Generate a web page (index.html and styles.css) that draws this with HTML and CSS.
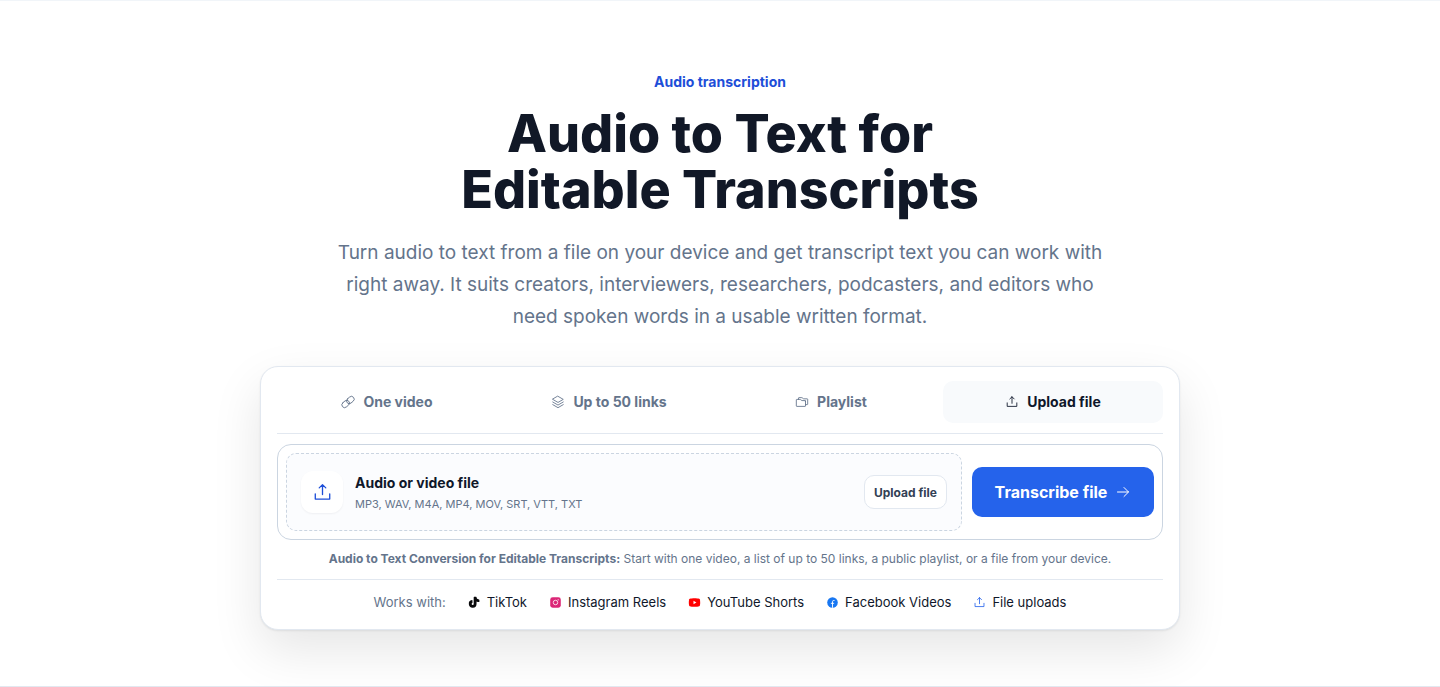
FILE: index.html
```html
<!DOCTYPE html>
<html lang="en">
<head>
<meta charset="utf-8">
<meta name="viewport" content="width=device-width, initial-scale=1">
<title>Audio to Text for Editable Transcripts</title>
<link rel="stylesheet" href="styles.css">
</head>
<body>
<svg class="sprite" aria-hidden="true">
  <symbol id="upload" viewBox="0 0 256 256"><path d="M216 144v64H40v-64M128 152V32M88 72l40-40 40 40"/></symbol>
  <symbol id="link" viewBox="0 0 256 256"><g transform="rotate(-40 128 128)"><rect x="-4" y="78" width="152" height="100" rx="50"/><rect x="108" y="78" width="152" height="100" rx="50"/></g></symbol>
  <symbol id="stack" viewBox="0 0 256 256"><path d="M32 80l96 56 96-56-96-56zM32 128l96 56 96-56M32 176l96 56 96-56"/></symbol>
  <symbol id="folders" viewBox="0 0 256 256"><path d="M192 112v88a8 8 0 0 1-8 8H32a8 8 0 0 1-8-8V88a8 8 0 0 1 8-8h61a8 8 0 0 1 5 2l28 20h58a8 8 0 0 1 8 10z"/><path d="M64 80V56a8 8 0 0 1 8-8h53a8 8 0 0 1 5 2l28 20h66a8 8 0 0 1 8 8v90a8 8 0 0 1-8 8h-32"/></symbol>
  <symbol id="arrow" viewBox="0 0 256 256"><path d="M40 128h176M144 56l72 72-72 72"/></symbol>
</svg>
<main class="hero">
  <header class="intro">
    <p class="eyebrow">Audio transcription</p>
    <h1 class="title">Audio to Text for<br>Editable Transcripts</h1>
    <p class="lead">Turn audio to text from a file on your device and get transcript text you can work with right away. It suits creators, interviewers, researchers, podcasters, and editors who need spoken words in a usable written format.</p>
  </header>
  <section class="card" aria-label="Transcription tool">
    <div class="tabs" role="tablist">
      <button class="tab" role="tab" aria-selected="false"><svg class="icon"><use href="#link"/></svg>One video</button>
      <button class="tab" role="tab" aria-selected="false"><svg class="icon"><use href="#stack"/></svg>Up to 50 links</button>
      <button class="tab" role="tab" aria-selected="false"><svg class="icon"><use href="#folders"/></svg>Playlist</button>
      <button class="tab tab-active" role="tab" aria-selected="true"><svg class="icon"><use href="#upload"/></svg>Upload file</button>
    </div>
    <div class="composer">
      <div class="dropzone">
        <span class="tile"><svg class="icon icon-large"><use href="#upload"/></svg></span>
        <div class="file-text">
          <p class="file-title">Audio or video file</p>
          <p class="file-types">MP3, WAV, M4A, MP4, MOV, SRT, VTT, TXT</p>
        </div>
        <button class="pick">Upload file</button>
      </div>
      <button class="submit">Transcribe file<svg class="icon icon-medium"><use href="#arrow"/></svg></button>
    </div>
    <p class="note"><strong>Audio to Text Conversion for Editable Transcripts:</strong> Start with one video, a list of up to 50 links, a public playlist, or a file from your device.</p>
    <div class="sources">
      <span class="sources-label">Works with:</span>
      <ul class="source-list">
        <li class="source"><svg class="logo" viewBox="0 0 256 256"><path fill="#09090b" d="M224 72v40a8 8 0 0 1-8 8 104 104 0 0 1-48-11v47a76 76 0 1 1-89-75 8 8 0 0 1 9 8v43a8 8 0 0 1-5 7 20 20 0 1 0 29 17V24a8 8 0 0 1 8-8h40a8 8 0 0 1 8 8 40 40 0 0 0 40 40 8 8 0 0 1 8 8z"/></svg>TikTok</li>
        <li class="source"><svg class="logo" viewBox="0 0 256 256"><rect x="24" y="24" width="208" height="208" rx="48" fill="#db2777"/><circle cx="128" cy="128" r="44" fill="none" stroke="#fff" stroke-width="16"/><circle cx="180" cy="76" r="12" fill="#fff"/></svg>Instagram Reels</li>
        <li class="source"><svg class="logo" viewBox="0 0 256 256"><path fill="#f00" d="M234 69a24 24 0 0 0-14-16c-35-14-149-14-184 0a24 24 0 0 0-14 16c-8 36-8 82 0 118a24 24 0 0 0 14 16c35 14 149 14 184 0a24 24 0 0 0 14-16c8-36 8-82 0-118z"/><path fill="#fff" d="M108 92l58 36-58 36z"/></svg>YouTube Shorts</li>
        <li class="source"><svg class="logo" viewBox="0 0 256 256"><circle cx="128" cy="128" r="104" fill="#1877f2"/><path d="M168 88h-16a24 24 0 0 0-24 24v120M96 144h64" fill="none" stroke="#fff" stroke-width="18"/></svg>Facebook Videos</li>
        <li class="source"><svg class="icon icon-small"><use href="#upload"/></svg>File uploads</li>
      </ul>
    </div>
  </section>
</main>
</body>
</html>
```

FILE: styles.css
```css
* { box-sizing: border-box; }
body, h1, p, ul { margin: 0; }
body {
  font-family: Inter, "Liberation Sans", sans-serif;
  color: #0f172a;
  background: #fff;
}
button { font: inherit; border: 0; background: none; cursor: pointer; }
.sprite { position: absolute; width: 0; height: 0; }

.hero {
  padding: 71px 24px 56px;
  border-top: 1px solid #f1f5f9;
  border-bottom: 1px solid #e2e8f0;
  overflow: hidden;
}
.intro { text-align: center; }
.eyebrow { font-size: 14px; line-height: 20px; font-weight: 750; color: #1d4ed8; }
.title { margin-top: 14px; font-size: 52px; line-height: 56px; font-weight: 800; color: #111827; }
.lead {
  max-width: 780px;
  margin: 19px auto 0;
  font-size: 19px;
  line-height: 32px;
  color: #64748b;
}

.icon {
  flex: none;
  width: 14px;
  height: 14px;
  fill: none;
  stroke: currentColor;
  stroke-width: 16;
  stroke-linecap: round;
  stroke-linejoin: round;
}
.icon-small { width: 13px; height: 13px; color: #2563eb; }
.icon-medium { width: 16px; height: 16px; }
.icon-large { width: 21px; height: 21px; }

.card {
  max-width: 920px;
  margin: 33px auto 0;
  padding: 14px 16px 17px;
  border: 1px solid #e2e8f0;
  border-radius: 18px;
  background: #fff;
  box-shadow: 0 20px 50px rgb(0 0 0 / 10%), 0 1px 2px rgb(15 23 42 / 8%);
}
.tabs {
  display: grid;
  grid-template-columns: repeat(4, 1fr);
  gap: 2px;
  padding-bottom: 10px;
  border-bottom: 1px solid #e2e8f0;
}
.tab {
  display: flex;
  align-items: center;
  justify-content: center;
  gap: 8px;
  height: 42px;
  padding: 0 0 1px;
  border-radius: 10px;
  font-size: 14px;
  font-weight: 700;
  color: #64748b;
}
.tab-active { background: #f8fafc; color: #0f172a; }

.composer {
  display: flex;
  align-items: center;
  gap: 10px;
  margin-top: 10px;
  padding: 8px;
  border: 1px solid #cbd5e1;
  border-radius: 14px;
}
.dropzone {
  flex: 1;
  display: flex;
  align-items: center;
  gap: 12px;
  min-height: 78px;
  padding: 0 14px;
  border: 1px dashed #cbd5e1;
  border-radius: 10px;
  background: #fbfcfe;
}
.tile {
  display: grid;
  place-items: center;
  width: 42px;
  height: 42px;
  border-radius: 12px;
  background: #fff;
  color: #1d4ed8;
  box-shadow: 0 1px 2px rgb(15 23 42 / 5%);
}
.file-text { flex: 1; }
.file-title { font-size: 14px; line-height: 20px; font-weight: 700; }
.file-types { margin-top: 3px; font-size: 11px; line-height: 16px; color: #64748b; }
.pick {
  height: 34px;
  padding: 0 9px;
  border: 1px solid #e2e8f0;
  border-radius: 10px;
  background: #fff;
  font-size: 12px;
  font-weight: 700;
  color: #334155;
}
.submit {
  display: flex;
  align-items: center;
  justify-content: center;
  gap: 8px;
  min-width: 182px;
  height: 50px;
  border-radius: 10px;
  background: #2563eb;
  color: #fff;
  font-size: 16px;
  font-weight: 700;
}
.note { margin-top: 9px; font-size: 12px; line-height: 20px; text-align: center; color: #64748b; }
.sources {
  display: flex;
  align-items: center;
  justify-content: center;
  flex-wrap: wrap;
  gap: 22px;
  margin-top: 10px;
  padding-top: 12px;
  border-top: 1px solid #e2e8f0;
  font-size: 13px;
  line-height: 20px;
}
.sources-label { color: #64748b; }
.source-list { display: flex; flex-wrap: wrap; gap: 22px; padding: 0; list-style: none; }
.source { display: flex; align-items: center; gap: 6px; }
.logo { width: 13px; height: 13px; }
```
